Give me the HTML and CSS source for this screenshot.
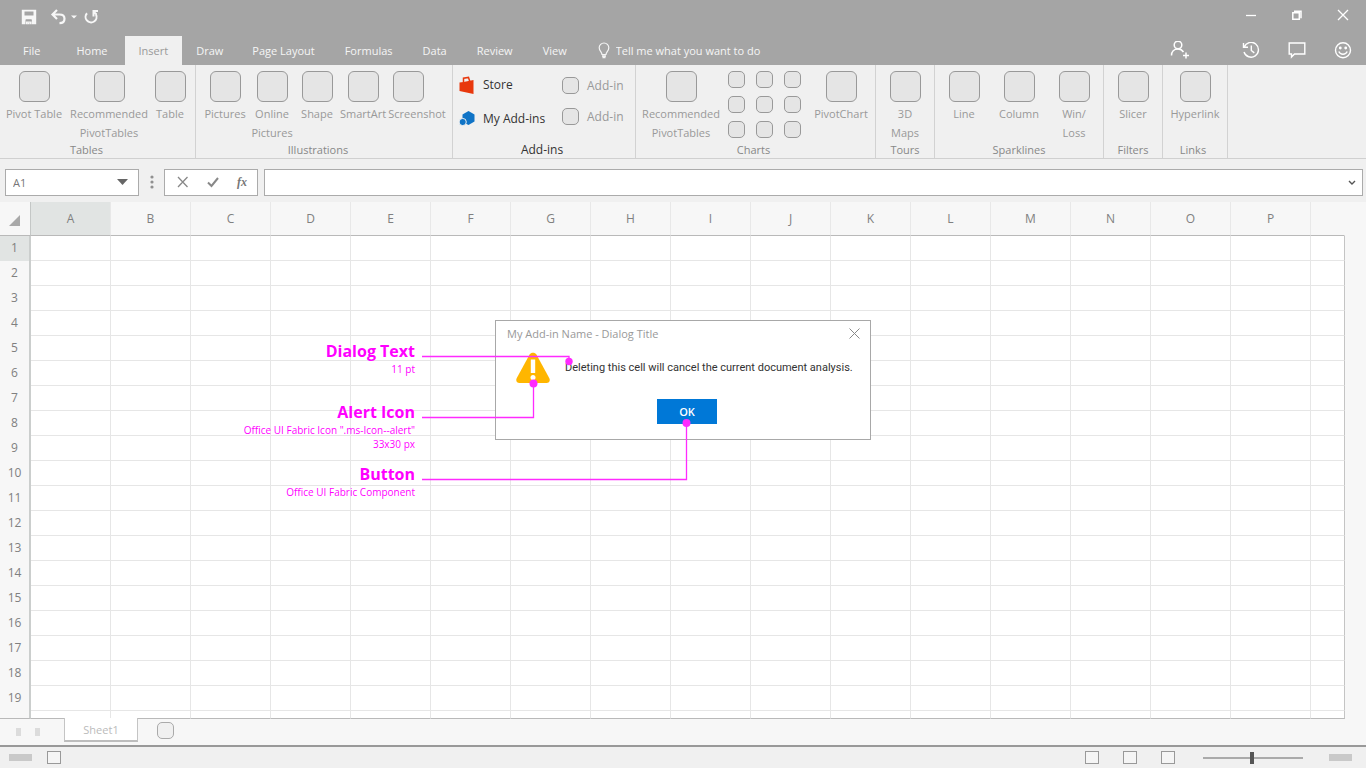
FILE: index.html
```html
<!DOCTYPE html>
<html lang="en">
<head>
<meta charset="utf-8">
<title>Spreadsheet – Dialog guidance</title>
<link rel="stylesheet" href="styles.css">
</head>
<body>
<header class="top">
  <div class="titlebar">
    <div class="quick">
      <button class="plain" aria-label="Save"><svg width="16" height="16" viewBox="0 0 16 16"><path fill="#f7f7f7" fill-rule="evenodd" d="M.8.8h14.400v14.400H.8zM3.500 2.500v4h9v-4zM4.500 10.500v4.700h2v-2h1.800v2h2.400v-4.700z"/><path d="M5 10.500h5.500v2.300H5z" fill="#a5a5a5"/><path d="M5 12.500h5.500v2.700H8.500v-1.800H6.700v1.800H5z" fill="#f7f7f7"/></svg></button>
      <button class="plain" aria-label="Undo"><svg width="17" height="16" viewBox="0 0 17 16" fill="none" stroke="#f7f7f7" stroke-width="2.200"><path d="M7 1L2.500 5.500 7 10M2.500 5.500H9.500c3 0 5 1.500 5 4.200s-2 4.400-5 4.400"/></svg></button>
      <button class="plain" aria-label="Undo history"><svg width="6" height="16" viewBox="0 0 6 16"><path d="M0 6.500h6L3 9.500z" fill="#f7f7f7"/></svg></button>
      <button class="plain redo" aria-label="Redo"><svg width="16" height="16" viewBox="0 0 16 16" fill="none" stroke="#f7f7f7" stroke-width="2"><path d="M3 4.200A5.500 5.500 0 1 0 12 5.500M8.500 2h5.500M9.500 2v5.500M9.500 2.500l3 3"/></svg></button>
    </div>
    <div class="window">
      <button class="plain" aria-label="Minimize"><svg width="14" height="14" viewBox="0 0 14 14"><path d="M2 6.500h10" stroke="#fff" stroke-width="1.300"/></svg></button>
      <button class="plain" aria-label="Restore"><svg width="14" height="14" viewBox="0 0 14 14" fill="none" stroke="#fff" stroke-width="1.500"><path d="M2.800 3.800h6.500v6.500H2.800zM4 2.200h7v7"/></svg></button>
      <button class="plain" aria-label="Close"><svg width="14" height="14" viewBox="0 0 14 14"><path d="M2 1l10 10M12 1L2 11" stroke="#fff" stroke-width="1.300"/></svg></button>
    </div>
  </div>
  <div class="tabrow">
    <nav class="tabs">
      <a href="#file" class="file">File</a><a href="#home" class="home">Home</a><a href="#insert" class="active">Insert</a><a href="#draw">Draw</a><a href="#layout">Page Layout</a><a href="#formulas">Formulas</a><a href="#data">Data</a><a href="#review">Review</a><a href="#view">View</a>
    </nav>
    <label class="tell">
      <svg width="12" height="18" viewBox="0 0 12 18" fill="none" stroke="#f4f4f4" stroke-width="1.200"><path d="M4 12.500c0-2.500-2.800-3.400-2.800-6.700a4.800 4.800 0 0 1 9.600 0c0 3.300-2.800 4.200-2.800 6.700z"/><path d="M4 14h4M4.500 15.500h3" stroke-width="1.400"/></svg>
      <input type="text" placeholder="Tell me what you want to do" aria-label="Tell me what you want to do">
    </label>
    <div class="account">
      <button class="plain share" aria-label="Share"><svg width="20" height="20" viewBox="0 0 20 20" fill="none" stroke="#fff" stroke-width="1.500"><circle cx="8" cy="4" r="3.800"/><path d="M1.500 14.500c0-3.800 2.500-6.500 6.500-6.500 2.700 0 4.400 1.200 5.500 3M16 11.500v6M13 14.500h6"/></svg></button>
      <button class="plain" aria-label="History"><svg width="18" height="18" viewBox="0 0 18 18" fill="none" stroke="#fff" stroke-width="1.400"><path d="M2.200 5A7.400 7.400 0 1 1 2 10M1.500 1v4.300H6M9.300 3.500v5l3 2.400"/></svg></button>
      <button class="plain" aria-label="Comments"><svg width="18" height="18" viewBox="0 0 18 18" fill="none" stroke="#fff" stroke-width="1.400"><path d="M1.200 1h15.600v11H6.500l-3 3v-3H1.200z"/></svg></button>
      <button class="plain" aria-label="Feedback"><svg width="18" height="18" viewBox="0 0 18 18" fill="none" stroke="#fff" stroke-width="1.400"><circle cx="9" cy="8.200" r="7.500"/><path d="M4.800 9.500c1.500 3.600 6.900 3.600 8.400 0"/><circle cx="6.300" cy="6" r=".7" fill="#fff"/><circle cx="11.700" cy="6" r=".7" fill="#fff"/></svg></button>
    </div>
  </div>
</header>

<section class="ribbon">
  <div class="group g-tables">
    <div class="items">
      <button class="tool w-68"><i class="box"></i>Pivot Table</button>
      <button class="tool w-82"><i class="box"></i>Recommended PivotTables</button>
      <button class="tool w-40"><i class="box"></i>Table</button>
    </div>
    <div class="name">Tables</div>
  </div>
  <div class="group g-illus">
    <div class="items">
      <button class="tool w-48"><i class="box"></i>Pictures</button>
      <button class="tool w-46"><i class="box"></i>Online Pictures</button>
      <button class="tool w-44"><i class="box"></i>Shape</button>
      <button class="tool w-48"><i class="box"></i>SmartArt</button>
      <button class="tool w-60 start"><i class="box"></i>Screenshot</button>
    </div>
    <div class="name">Illustrations</div>
  </div>
  <div class="group g-addins">
    <div class="items">
      <div class="stack wide">
        <button class="line on"><svg width="16" height="18" viewBox="0 0 16 18"><path d="M.5 6.500l4-.5L14.500 4v14L.5 15z" fill="#e8380d"/><path d="M4.500 6.500V2.200l5-.8 1.300 4" fill="none" stroke="#e8380d" stroke-width="1.500"/></svg>Store</button>
        <button class="line on"><svg width="16" height="16" viewBox="0 0 16 16"><path d="M9.500 0l6 3.500v7l-6 3.500L3.500 11V3.500z" fill="#0f73c6"/><circle cx="3.700" cy="11" r="3.600" fill="#0f73c6" stroke="#f0f0f0"/></svg>My Add-ins</button>
      </div>
      <div class="stack close">
        <button class="line"><i class="box small"></i>Add-in</button>
        <button class="line"><i class="box small"></i>Add-in</button>
      </div>
    </div>
    <div class="name">Add-ins</div>
  </div>
  <div class="group g-charts">
    <div class="items">
      <button class="tool w-82"><i class="box"></i>Recommended PivotTables</button>
      <div class="gallery">
        <button class="box small" aria-label="Column chart"></button><button class="box small" aria-label="Line chart"></button><button class="box small" aria-label="Pie chart"></button>
        <button class="box small" aria-label="Bar chart"></button><button class="box small" aria-label="Area chart"></button><button class="box small" aria-label="Scatter chart"></button>
        <button class="box small" aria-label="Stock chart"></button><button class="box small" aria-label="Radar chart"></button><button class="box small" aria-label="Combo chart"></button>
      </div>
      <button class="tool w-60"><i class="box"></i>PivotChart</button>
    </div>
    <div class="name">Charts</div>
  </div>
  <div class="group g-tours">
    <div class="items"><button class="tool w-40"><i class="box"></i>3D<br>Maps</button></div>
    <div class="name">Tours</div>
  </div>
  <div class="group g-spark">
    <div class="items">
      <button class="tool w-48"><i class="box"></i>Line</button>
      <button class="tool w-48"><i class="box"></i>Column</button>
      <button class="tool w-48"><i class="box"></i>Win/<br>Loss</button>
    </div>
    <div class="name">Sparklines</div>
  </div>
  <div class="group g-filters">
    <div class="items"><button class="tool w-48"><i class="box"></i>Slicer</button></div>
    <div class="name">Filters</div>
  </div>
  <div class="group g-links">
    <div class="items"><button class="tool w-60"><i class="box"></i>Hyperlink</button></div>
    <div class="name">Links</div>
  </div>
</section>

<section class="formula">
  <div class="namebox">
    <select aria-label="Name box"><option>A1</option></select>
    <svg width="12" height="6" viewBox="0 0 12 6"><path d="M0 0h11L5.500 6z" fill="#666"/></svg>
  </div>
  <svg class="grip" width="4" height="14" viewBox="0 0 4 14" fill="#909090"><circle cx="2" cy="2" r="1.600"/><circle cx="2" cy="7" r="1.600"/><circle cx="2" cy="12" r="1.600"/></svg>
  <div class="entry">
    <button class="plain" aria-label="Cancel"><svg width="12" height="12" viewBox="0 0 12 12"><path d="M1 1l9.500 10M10.500 1L1 11" stroke="#888" stroke-width="1.300"/></svg></button>
    <button class="plain" aria-label="Enter"><svg width="12" height="12" viewBox="0 0 12 12"><path d="M1 6.500l3.500 3.500L11 2" fill="none" stroke="#888" stroke-width="2"/></svg></button>
    <button class="plain fx" aria-label="Insert function">fx</button>
  </div>
  <div class="bar">
    <input type="text" aria-label="Formula">
    <button class="plain" aria-label="Expand formula bar"><svg width="8" height="6" viewBox="0 0 8 6"><path d="M1 2l3 3 3-3" fill="none" stroke="#555" stroke-width="1.400"/></svg></button>
  </div>
</section>

<main class="sheet">
  <table class="grid">
    <colgroup><col class="c-head"><col class="c" span="16"><col></colgroup>
    <thead><tr id="letters"><th class="corner"><svg width="11" height="11" viewBox="0 0 11 11"><path d="M11 0v11H0z" fill="#a9a9a9"/></svg></th></tr></thead>
    <tbody id="rows"></tbody>
  </table>

  <div class="dialog" role="dialog" aria-labelledby="dlg-title">
    <div class="dialog-head">
      <span id="dlg-title">My Add-in Name - Dialog Title</span>
      <button class="plain" aria-label="Close dialog"><svg width="11" height="11" viewBox="0 0 11 11"><path d="M.5.5l10 10M10.500.5L.5 10.500" stroke="#888"/></svg></button>
    </div>
    <div class="dialog-body">
      <svg width="34" height="32" viewBox="0 0 34 32"><path d="M13.600 2.500C15 0 19 0 20.400 2.500L33.200 26c1.400 2.600 0 5-2.700 5h-27C.8 31-.6 28.600.8 26z" fill="#ffb600"/><path d="M14.800 7.500h4.400v13.500h-4.400z" fill="#fff"/><circle cx="17" cy="25.500" r="2.500" fill="#fff"/></svg>
      <p>Deleting this cell will cancel the current document analysis.</p>
    </div>
    <button class="ok">OK</button>
  </div>

  <div class="notes">
    <div class="note n-text"><h3>Dialog Text</h3><p>11 pt</p></div>
    <div class="note n-icon"><h3>Alert Icon</h3><p>Office UI Fabric Icon ".ms-Icon--alert"</p><p>33x30 px</p></div>
    <div class="note n-button"><h3>Button</h3><p>Office UI Fabric Component</p></div>
  </div>
  <svg class="leaders" width="270" height="130" viewBox="0 0 270 130" fill="none" stroke="#ff2bff" stroke-width="1.300">
    <path d="M0 1.500h147v4M0 62.500h111.500V28M0 124.500h264.500V68"/>
    <g fill="#ff2bff" stroke="none"><circle cx="147" cy="6.500" r="3.700"/><circle cx="111.500" cy="28.500" r="4"/><circle cx="264.500" cy="68" r="4"/></g>
  </svg>
</main>

<footer>
  <div class="sheets">
    <button class="step" aria-label="Previous sheet"></button>
    <button class="step" aria-label="Next sheet"></button>
    <button class="sheet-tab">Sheet1</button>
    <button class="box small add" aria-label="New sheet"></button>
  </div>
  <div class="status">
    <span class="block"></span>
    <button class="square" aria-label="Record macro"></button>
    <div class="views">
      <button class="square" aria-label="Normal view"></button>
      <button class="square" aria-label="Page layout view"></button>
      <button class="square" aria-label="Page break view"></button>
    </div>
    <input type="range" aria-label="Zoom" min="0" max="100" value="49">
    <span class="block"></span>
  </div>
</footer>
<script src="grid.js"></script>
</body>
</html>
```
FILE: styles.css
```css
* { box-sizing: border-box; }
body {
  margin: 0;
  min-height: 100vh;
  display: flex;
  flex-direction: column;
  background: #f7f7f7;
  font: 11px/19px "Open Sans", "Noto Sans", sans-serif;
  color: #999;
  overflow-x: hidden;
}
button, input, select {
  font: inherit;
  color: inherit;
  background: none;
  border: 0;
  padding: 0;
  margin: 0;
  border-radius: 0;
  outline: 0;
}
svg { display: block; flex: none; }
.plain { display: flex; align-items: center; justify-content: center; }

/* Title bar and tabs */
.top { background: #a5a5a5; color: #f5f5f5; }
.titlebar {
  height: 36px;
  display: flex;
  justify-content: space-between;
  align-items: flex-start;
  padding: 9px 16px 0 21px;
}
.quick { display: flex; gap: 4px; align-items: center; }
.quick .plain:nth-child(2) { margin-left: 9px; }
.redo { margin-left: 3px; }
.window { display: flex; gap: 32px; }
.tabrow { height: 29px; display: flex; align-items: center; padding-right: 14px; }
.tabs { display: flex; }
.tabs a {
  color: inherit;
  text-decoration: none;
  height: 29px;
  line-height: 30px;
  padding: 0 15px;
}
.tabs .file { padding: 0 19px 0 23px; }
.tabs .home { padding: 0 17px; }
.tabs .active { padding: 0 14px; background: #f0f0f0; color: #999; }
.tabs .active + a { padding: 0 14px; }
.tell { display: flex; align-items: center; gap: 6px; margin-left: 16px; }
.tell input { width: 180px; line-height: 20px; }
.tell input::placeholder { color: #f5f5f5; opacity: 1; }
.account { display: flex; gap: 28px; margin-left: auto; align-items: center; }
.share { margin-right: 24px; }

/* Ribbon */
.ribbon {
  height: 94px;
  display: flex;
  background: #f0f0f0;
  border-bottom: 1px solid #d0d0d0;
}
.group {
  display: flex;
  flex-direction: column;
  flex: none;
  border-right: 1px solid #d2d2d2;
}
.items { flex: 1; display: flex; align-items: flex-start; justify-content: center; padding-top: 6px; min-height: 0; }
.name { text-align: center; line-height: 15px; padding-bottom: 1px; color: #888; }
.g-tables { width: 196px; }
.g-tables .items { justify-content: flex-start; }
.g-tables .name { padding-right: 22px; }
.g-illus { width: 257px; }
.g-illus .name { padding-right: 12px; }
.g-addins { width: 183px; font-size: 12px; }
.g-addins .items { justify-content: flex-start; padding-left: 6px; }
.g-addins .name { color: #333; padding-right: 4px; }
.g-charts { width: 240px; }
.g-charts .name { padding-right: 4px; }
.g-tours { width: 59px; }
.g-spark { width: 169px; }
.g-filters { width: 59px; }
.g-links { width: 65px; }
.g-links .name { padding-right: 4px; }
.tool {
  display: flex;
  flex-direction: column;
  align-items: center;
  gap: 2px;
  line-height: 19px;
  text-align: center;
}
.tool.start .box { align-self: flex-start; margin-left: 6px; }
.w-40 { width: 40px; }
.w-44 { width: 44px; }
.w-46 { width: 46px; }
.w-48 { width: 48px; }
.w-60 { width: 60px; }
.w-68 { width: 68px; }
.w-82 { width: 82px; }
.box {
  display: block;
  flex: none;
  width: 31px;
  height: 31px;
  border: 1px solid #999;
  border-radius: 6px;
  background: #e5e5e5;
}
.box.small { width: 17px; height: 17px; border-radius: 5px; }
.g-spark .items { gap: 7px; }
.stack { display: flex; flex-direction: column; }
.stack.wide { gap: 15px; padding-top: 4px; width: 103px; }
.stack.close { gap: 12px; padding-top: 5px; }
.line { display: flex; align-items: center; gap: 8px; }
.line.on { color: #333; }
.gallery {
  display: grid;
  grid-template-columns: repeat(3, 17px);
  gap: 8px 11px;
  margin: 0 10px 0 6px;
}

/* Formula bar */
.formula {
  display: flex;
  align-items: center;
  height: 43px;
  padding: 3px 3px 0 5px;
  background: #f0f0f0;
}
.namebox, .entry, .bar {
  display: flex;
  align-items: center;
  height: 27px;
  background: #fff;
  border: 1px solid #ababab;
}
.namebox { width: 134px; padding-right: 9px; }
.namebox select { flex: 1; appearance: none; padding-left: 7px; color: #777; }
.grip { margin: 0 10px 0 11px; }
.entry { width: 94px; justify-content: space-between; padding: 0 10px 0 12px; }
.fx { font: italic bold 12px/19px "Liberation Serif", serif; color: #777; }
.bar { flex: 1; margin-left: 6px; padding-right: 6px; }
.bar input { flex: 1; min-width: 0; padding-left: 6px; }

/* Sheet */
.sheet { position: relative; flex: 1; padding-right: 21px; }
.grid { width: 100%; table-layout: fixed; border-collapse: separate; border-spacing: 0; font-size: 12px; }
.c-head { width: 31px; }
.c { width: 80px; }
.grid th { font-weight: 400; padding: 0; background: #f7f7f7; color: #808080; }
.grid thead th { height: 34px; border-right: 1px solid #e8e8e8; border-bottom: 1px solid #b9b9b9; }
.grid thead th:last-child { border-right-color: #f7f7f7; }
.grid thead .corner { border-right-color: #c4c7c6; padding: 3px 0 0 9px; }
.grid thead .picked, .grid tbody .picked { background: #e1e4e3; }
.grid tbody th { height: 25px; padding-bottom: 2px; border-right: 2px solid #cbcecd; }
.grid td { padding: 0; height: 25px; background: #fff; border-right: 1px solid #e6e6e6; border-bottom: 1px solid #e6e6e6; }
.grid td:last-child { border-right-color: #c4c4c4; }
.grid .last th, .grid .last td { height: 8px; padding: 0; border-bottom: 1px solid #b9b9b9; }

/* Dialog */
.dialog {
  position: absolute;
  left: 495px;
  top: 118px;
  width: 376px;
  height: 120px;
  background: #fff;
  border: 1px solid #a8a8a8;
  color: #333;
}
.dialog-head { display: flex; justify-content: space-between; align-items: center; padding: 3px 10px 0 11px; color: #999; }
.dialog-body { display: flex; align-items: center; gap: 15px; padding: 9px 0 0 20px; }
.dialog-body p { margin: 0; padding-bottom: 2px; white-space: nowrap; font-family: Roboto, sans-serif; }
.ok { display: block; width: 60px; height: 25px; margin: 15px auto 0 161px; background: #0078d7; color: #fff; font-weight: 600; }

/* Callouts */
.note { position: absolute; left: 200px; width: 215px; text-align: right; color: #f0f; }
.note h3 { margin: 0; font-size: 16px; line-height: 22px; font-weight: 700; }
.note p { margin: 0; font-size: 10px; line-height: 14px; }
.n-text { top: 138px; }
.n-icon { top: 199px; }
.n-button { top: 261px; }
.leaders { position: absolute; left: 422px; top: 153px; }

/* Footer */
.sheets { display: flex; align-items: flex-start; height: 26px; padding-left: 16px; }
.step { width: 5px; height: 8px; margin: 9px 14px 0 0; background: #dcdcdc; }
.sheet-tab {
  width: 74px;
  height: 24px;
  margin: -1px 19px 0 10px;
  position: relative;
  background: #fff;
  border: 1px solid #c4c4c4;
  border-top: 0;
  border-bottom: 2px solid #bdbdbd;
  color: #bbb;
}
.add { margin-top: 3px; background: #f0f0f0; border-color: #aaa; }
.status {
  display: flex;
  align-items: center;
  height: 23px;
  padding: 0 14px 0 9px;
  background: #f0f0f0;
  border-top: 2px solid #999;
}
.block { width: 23px; height: 7px; background: #c9c9c9; }
.square { width: 14px; height: 13px; border: 1px solid #999; background: #f5f5f5; }
.status > .square { margin-left: 15px; }
.views { display: flex; gap: 24px; margin-left: auto; }
.status input { appearance: none; width: 100px; height: 12px; margin: 0 26px 0 28px; }
.status input::-webkit-slider-runnable-track { height: 12px; background: linear-gradient(#aaa, #aaa) center / 100% 2px no-repeat; }
.status input::-webkit-slider-thumb { appearance: none; width: 4px; height: 12px; background: #555; }
```
FILE: grid.js
```js
const letters = document.getElementById('letters');
[...'ABCDEFGHIJKLMNOP', ''].forEach((l, i) => {
  const th = document.createElement('th');
  th.textContent = l;
  if (i === 0) th.className = 'picked';
  letters.appendChild(th);
});
const rows = document.getElementById('rows');
for (let r = 1; r <= 20; r++) {
  const tr = document.createElement('tr');
  const th = document.createElement('th');
  th.textContent = r < 20 ? r : '';
  if (r === 1) th.className = 'picked';
  if (r === 20) tr.className = 'last';
  tr.appendChild(th);
  for (let c = 0; c < 17; c++) tr.appendChild(document.createElement('td'));
  rows.appendChild(tr);
}
```
